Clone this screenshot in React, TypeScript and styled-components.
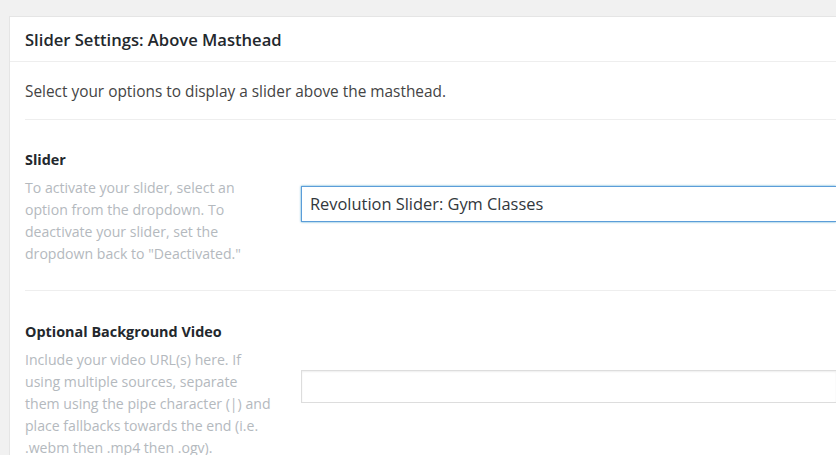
import styled, { createGlobalStyle } from 'styled-components';

const GlobalStyle = createGlobalStyle`
  body {
    margin: 0;
    background: #f1f1f1;
    font-family: 'Open Sans', 'Noto Sans', sans-serif;
    color: #23282d;
  }
`;

const Page = styled.div`
  padding: 16px 0 0 9px;
  height: 455px;
  box-sizing: border-box;
  overflow: hidden;
`;

const Panel = styled.div`
  background: #fff;
  border: 1px solid #e5e5e5;
  border-right: 0;
  min-height: 500px;
`;

const PanelHeader = styled.div`
  height: 44px;
  display: flex;
  align-items: center;
  padding: 0 15px;
  border-bottom: 1px solid #eee;
`;

const PanelTitle = styled.h2`
  margin: 0;
  font-size: 16.6px;
  font-weight: 600;
  color: #23282d;
`;

const PanelBody = styled.div`
  padding: 0 0 0 15px;
`;

const Intro = styled.p`
  margin: 0;
  padding: 19px 0 16px;
  font-size: 15.4px;
  line-height: 22px;
  color: #444;
  border-bottom: 1px solid #eee;
`;

const Row = styled.div<{ $top: number; $bottom: number }>`
  display: flex;
  align-items: center;
  padding: ${(p) => p.$top}px 0 ${(p) => p.$bottom}px;
  border-bottom: 1px solid #eee;
`;

const LabelCol = styled.div`
  width: 247px;
  flex-shrink: 0;
  margin-right: 29px;
`;

const Label = styled.div`
  font-size: 14.4px;
  font-weight: 700;
  line-height: 22px;
  margin-bottom: 6px;
  color: #23282d;
`;

const Help = styled.div`
  font-size: 14.1px;
  line-height: 22px;
  color: #b4b9be;
`;

const Field = styled.div<{ $focused?: boolean }>`
  flex: 1;
  height: ${(p) => (p.$focused ? 36 : 33)}px;
  margin-bottom: 7px;
  box-sizing: border-box;
  display: flex;
  align-items: center;
  padding: 0 8px;
  background: #fff;
  border: 1px solid ${(p) => (p.$focused ? '#5b9dd9' : '#ddd')};
  border-right: 0;
  box-shadow: ${(p) =>
    p.$focused ? '0 0 2px rgba(30, 140, 190, 0.8)' : 'inset 0 1px 2px rgba(0, 0, 0, 0.07)'};
  font-size: 16.4px;
  color: #32373c;
`;

function App() {
  return (
    <>
      <GlobalStyle />
      <Page>
        <Panel>
          <PanelHeader>
            <PanelTitle>{'Slider Settings: Above Masthead'}</PanelTitle>
          </PanelHeader>
          <PanelBody>
            <Intro>{'Select your options to display a slider above the masthead.'}</Intro>
            <Row $top={29} $bottom={25}>
              <LabelCol>
                <Label>{'Slider'}</Label>
                <Help>
                  {'To activate your slider, select an option from the dropdown. To deactivate your slider, set the dropdown back to "Deactivated."'}
                </Help>
              </LabelCol>
              <Field $focused>{'Revolution Slider: Gym Classes'}</Field>
            </Row>
            <Row $top={30} $bottom={30}>
              <LabelCol>
                <Label>{'Optional Background Video'}</Label>
                <Help>
                  {'Include your video URL(s) here. If using multiple sources, separate them using the pipe character (|) and place fallbacks towards the end (i.e. .webm then .mp4 then .ogv).'}
                </Help>
              </LabelCol>
              <Field />
            </Row>
          </PanelBody>
        </Panel>
      </Page>
    </>
  );
}

export default App;
